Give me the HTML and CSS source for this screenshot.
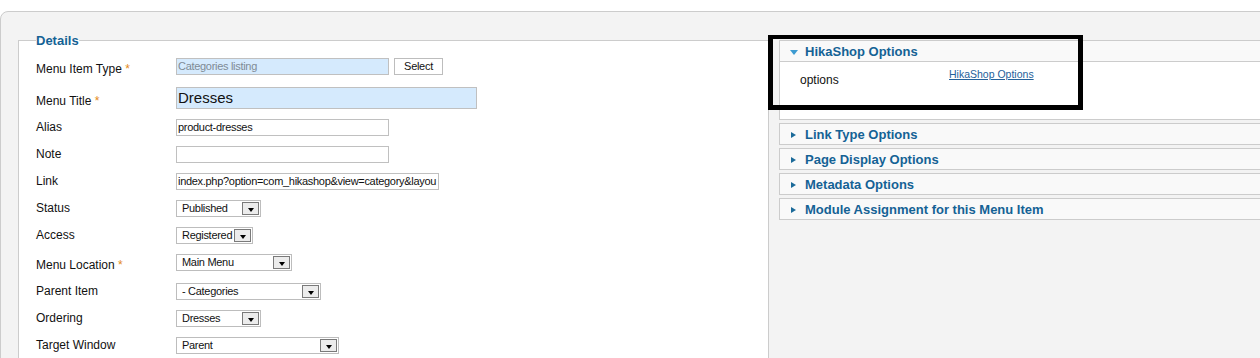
FILE: index.html
```html
<!DOCTYPE html>
<html lang="en">
  <head>
    <meta charset="UTF-8">
    <title>Menu Item: Edit</title>
    <link rel="stylesheet" href="styles.css">
  </head>
  <body>
    <div class="panel">
      <fieldset class="details">
        <legend>Details</legend>
        <div class="row req">
          <label>Menu Item Type <span class="star">*</span></label>
          <span class="box box-type readonly">Categories listing</span>
          <span class="btn">Select</span>
        </div>
        <div class="row req title">
          <label>Menu Title <span class="star">*</span></label>
          <span class="box box-title">Dresses</span>
        </div>
        <div class="row">
          <label>Alias</label>
          <span class="box box-mid">product-dresses</span>
        </div>
        <div class="row">
          <label>Note</label>
          <span class="box box-mid"></span>
        </div>
        <div class="row">
          <label>Link</label>
          <span class="box box-link">index.php?option=com_hikashop&amp;view=category&amp;layou</span>
        </div>
        <div class="row">
          <label>Status</label>
          <span class="sel w86"><span class="sel-text">Published</span><span class="arrow"></span></span>
        </div>
        <div class="row">
          <label>Access</label>
          <span class="sel w78"><span class="sel-text">Registered</span><span class="arrow"></span></span>
        </div>
        <div class="row req">
          <label>Menu Location <span class="star">*</span></label>
          <span class="sel w117"><span class="sel-text">Main Menu</span><span class="arrow"></span></span>
        </div>
        <div class="row">
          <label>Parent Item</label>
          <span class="sel w146"><span class="sel-text">- Categories</span><span class="arrow"></span></span>
        </div>
        <div class="row">
          <label>Ordering</label>
          <span class="sel w86"><span class="sel-text">Dresses</span><span class="arrow"></span></span>
        </div>
        <div class="row">
          <label>Target Window</label>
          <span class="sel w164"><span class="sel-text">Parent</span><span class="arrow"></span></span>
        </div>
      </fieldset>

      <div class="sliders">
        <div class="pane open">
          <div class="pane-head"><span class="tri"></span>HikaShop Options</div>
          <div class="pane-body">
            <span class="opt-label">options</span>
            <a href="#" class="opt-link">HikaShop Options</a>
          </div>
        </div>
        <div class="pane">
          <div class="pane-head"><span class="tri"></span>Link Type Options</div>
        </div>
        <div class="pane">
          <div class="pane-head"><span class="tri"></span>Page Display Options</div>
        </div>
        <div class="pane">
          <div class="pane-head"><span class="tri"></span>Metadata Options</div>
        </div>
        <div class="pane">
          <div class="pane-head"><span class="tri"></span>Module Assignment for this Menu Item</div>
        </div>
      </div>
    </div>

    <!-- highlight drawn over the screenshot -->
    <div class="callout"></div>
  </body>
</html>
```

FILE: styles.css
```css
html, body {
  margin: 0;
  overflow: hidden;
  background-color: #fff;
  font-family: "Liberation Sans", Arial, sans-serif;
  color: #111;
}

.panel {
  display: flex;
  align-items: flex-start;
  width: 1320px;
  margin-top: 11px;
  padding: 20px 0 0 17px;
  background-color: #f3f3f3;
  border: 1px solid #ccc;
  border-top-left-radius: 8px;
}

/* left column: details form */

.details {
  flex: none;
  box-sizing: border-box;
  width: 751px;
  margin: 0;
  padding: 9px 0 0 17px;
  background-color: #fff;
  border: 1px solid #ccc;
}

.details legend {
  padding: 0;
  font-size: 13px;
  font-weight: bold;
  line-height: 17px;
  color: #146295;
}

.row {
  display: flex;
  align-items: flex-start;
  margin-bottom: 10px;
}

.row label {
  flex: none;
  width: 140px;
  padding-top: 1px;
  font-size: 12px;
  line-height: 14px;
}

.row.req label {
  padding: 4px 0 1px;
}

.row.title label {
  padding-top: 7px;
}

.star {
  color: #e48a17;
}

.box {
  display: block;
  box-sizing: border-box;
  height: 17px;
  padding: 0 1px;
  border: 1px solid #c0c0c0;
  background-color: #fff;
  font-size: 11px;
  letter-spacing: -0.3px;
  line-height: 15px;
  white-space: nowrap;
  overflow: hidden;
}

.box-mid, .box-type {
  width: 213px;
}

.box-link {
  width: 263px;
}

.readonly {
  background-color: #d5eafd;
  color: #7f8a95;
}

.box-title {
  width: 301px;
  height: 22px;
  font-size: 15px;
  letter-spacing: 0;
  line-height: 20px;
  background-color: #d5eafd;
}

.btn {
  box-sizing: border-box;
  width: 49px;
  height: 17px;
  margin-left: 5px;
  border: 1px solid #bdbdbd;
  background-color: #fff;
  font-size: 11px;
  letter-spacing: -0.3px;
  line-height: 15px;
  text-align: center;
}

.sel {
  display: flex;
  box-sizing: border-box;
  height: 17px;
  padding-left: 5px;
  border: 1px solid #bdbdbd;
  background-color: #fff;
  font-size: 11px;
  letter-spacing: -0.3px;
  line-height: 15px;
}

.sel-text {
  flex: 1;
  white-space: nowrap;
  overflow: hidden;
}

.arrow {
  display: flex;
  justify-content: center;
  flex: none;
  box-sizing: border-box;
  width: 17px;
  height: 13px;
  margin: 1px;
  border: 1px solid #7a7a7a;
  background-color: #ececec;
}

.arrow::after {
  content: "";
  margin-top: 5px;
  border-left: 3.5px solid transparent;
  border-right: 3.5px solid transparent;
  border-top: 4px solid #000;
  height: 0;
}

.w78 { width: 77px; }
.w86 { width: 85px; }
.w117 { width: 116px; }
.w146 { width: 145px; }
.w164 { width: 163px; }

/* right column: option sliders */

.sliders {
  flex: 1;
  margin: 8px 0 0 10px;
}

.pane {
  margin-bottom: 3px;
  border: 1px solid #ccc;
  background-color: #fff;
}

.pane-head {
  display: flex;
  align-items: center;
  height: 20px;
  padding-left: 10px;
  background-color: #f9f9f9;
  font-size: 13px;
  font-weight: bold;
  color: #146295;
}

.pane .tri {
  width: 0;
  height: 0;
  margin: 1px 9px 0 1px;
  border-top: 3.5px solid transparent;
  border-bottom: 3.5px solid transparent;
  border-left: 5px solid #1b6a99;
}

.pane.open .tri {
  margin: 2px 7px 0 0;
  border-left: 4px solid transparent;
  border-right: 4px solid transparent;
  border-top: 5px solid #3d9bd1;
  border-bottom: 0;
}

.pane.open .pane-head {
  border-bottom: 1px solid #ccc;
}

.pane-body {
  display: flex;
  align-items: flex-start;
  box-sizing: border-box;
  height: 57px;
  padding: 6px 0 0 20px;
}

.opt-label {
  width: 149px;
  margin-top: 5px;
  font-size: 12px;
  line-height: 14px;
}

.opt-link {
  font-size: 10.5px;
  line-height: 13px;
  color: #25619a;
}

.callout {
  position: absolute;
  left: 768px;
  top: 35px;
  box-sizing: border-box;
  width: 315px;
  height: 75px;
  border: 5px solid #000;
  border-top-width: 4px;
}
```
